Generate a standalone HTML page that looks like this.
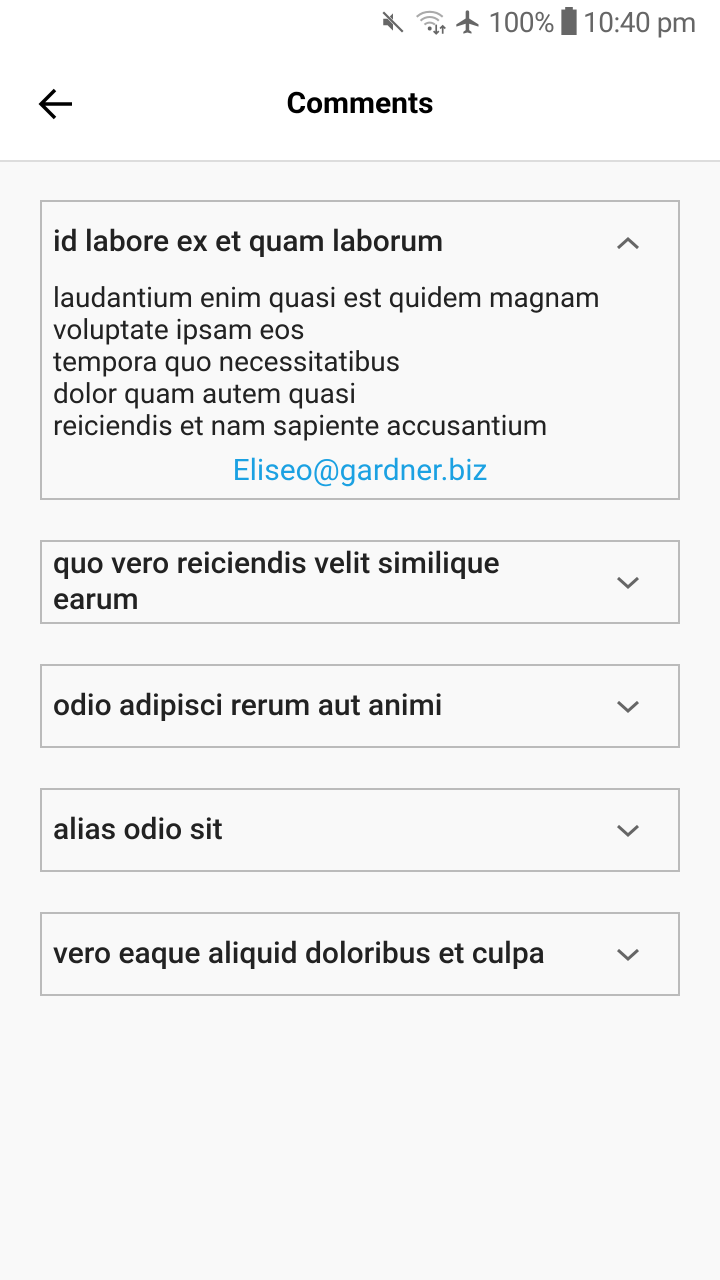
<!DOCTYPE html>
<html><head><meta charset="utf-8"><style>
body{margin:0;width:720px;height:1280px;background:#f9f9f9;font-family:"Roboto","Liberation Sans",sans-serif;position:relative;overflow:hidden;color:#212121}
.top{position:absolute;left:0;top:0;width:720px;height:160px;background:#fff;border-bottom:2px solid #ddd}
.status{position:absolute;right:24px;top:6px;font-size:28px;color:#666;letter-spacing:-0.5px}
.title{position:absolute;left:0;width:720px;top:86px;text-align:center;font-size:30px;font-weight:bold;color:#000;line-height:36px}
.box{position:absolute;left:40px;width:636px;border:2px solid #bbb}
.h{position:absolute;left:11px;font-size:30px;font-weight:500;color:#222;line-height:36px}
.chev{position:absolute;right:38px;width:24px;height:14px}
.body{position:absolute;left:11px;top:80px;font-size:28px;line-height:32px;color:#222}
.mail{position:absolute;left:0;width:636px;text-align:center;top:251px;font-size:30px;color:#1ba1e2}
</style></head><body>
<div class="top">
<div class="status"><svg width="28" height="26" viewBox="0 0 24 24" style="vertical-align:-3px"><path d="M3 9h4l5-5v16l-5-5H3z" fill="#666"/><path d="M3 3l18 18" stroke="#fff" stroke-width="3"/><path d="M3 3l18 18" stroke="#666" stroke-width="2"/></svg>
<svg width="34" height="26" viewBox="0 0 24 20" style="vertical-align:-3px"><path d="M1 6a15 15 0 0 1 20 0M4 9a10 10 0 0 1 14 0M7 12a6 6 0 0 1 8 0" stroke="#aaa" stroke-width="1.6" fill="none"/><circle cx="11" cy="15" r="1.5" fill="#666"/><path d="M16 12v7M14 17l2 2 2-2M21 19v-6M19 15l2-2 2 2" stroke="#666" stroke-width="1.3" fill="none"/></svg>
<svg width="28" height="28" viewBox="0 0 24 24" style="vertical-align:-4px"><path d="M21 16v-2l-8-5V3.5a1.5 1.5 0 0 0-3 0V9l-8 5v2l8-2.5V19l-2 1.5V22l3.5-1 3.5 1v-1.5L13 19v-5.5z" fill="#666"/></svg>
100% <svg width="16" height="28" viewBox="0 0 12 22" style="vertical-align:-3px"><rect x="0" y="2" width="12" height="20" fill="#666"/><rect x="3" y="0" width="6" height="3" fill="#666"/></svg> 10:40 pm</div>
<svg style="position:absolute;left:38px;top:88px" width="36" height="32" viewBox="0 0 36 32"><path d="M34 16H4M17 2L3 16l14 14" stroke="#000" stroke-width="3.5" fill="none"/></svg>
<div class="title">Comments</div>
</div>

<div class="box" style="top:200px;height:296px">
<div class="h" style="top:22px">id labore ex et quam laborum</div>
<svg class="chev" style="top:34px" viewBox="0 0 24 14"><path d="M2 12L12 3l10 9" stroke="#666" stroke-width="3" fill="none"/></svg>
<div class="body">laudantium enim quasi est quidem magnam<br>voluptate ipsam eos<br>tempora quo necessitatibus<br>dolor quam autem quasi<br>reiciendis et nam sapiente accusantium</div>
<div class="mail">Eliseo@gardner.biz</div>
</div>

<div class="box" style="top:540px;height:80px">
<div class="h" style="top:4px">quo vero reiciendis velit similique<br>earum</div>
<svg class="chev" style="top:34px" viewBox="0 0 24 14"><path d="M2 2l10 9 10-9" stroke="#666" stroke-width="3" fill="none"/></svg>
</div>
<div class="box" style="top:664px;height:80px">
<div class="h" style="top:22px">odio adipisci rerum aut animi</div>
<svg class="chev" style="top:34px" viewBox="0 0 24 14"><path d="M2 2l10 9 10-9" stroke="#666" stroke-width="3" fill="none"/></svg>
</div>
<div class="box" style="top:788px;height:80px">
<div class="h" style="top:22px">alias odio sit</div>
<svg class="chev" style="top:34px" viewBox="0 0 24 14"><path d="M2 2l10 9 10-9" stroke="#666" stroke-width="3" fill="none"/></svg>
</div>
<div class="box" style="top:912px;height:80px">
<div class="h" style="top:22px">vero eaque aliquid doloribus et culpa</div>
<svg class="chev" style="top:34px" viewBox="0 0 24 14"><path d="M2 2l10 9 10-9" stroke="#666" stroke-width="3" fill="none"/></svg>
</div>
</body></html>
